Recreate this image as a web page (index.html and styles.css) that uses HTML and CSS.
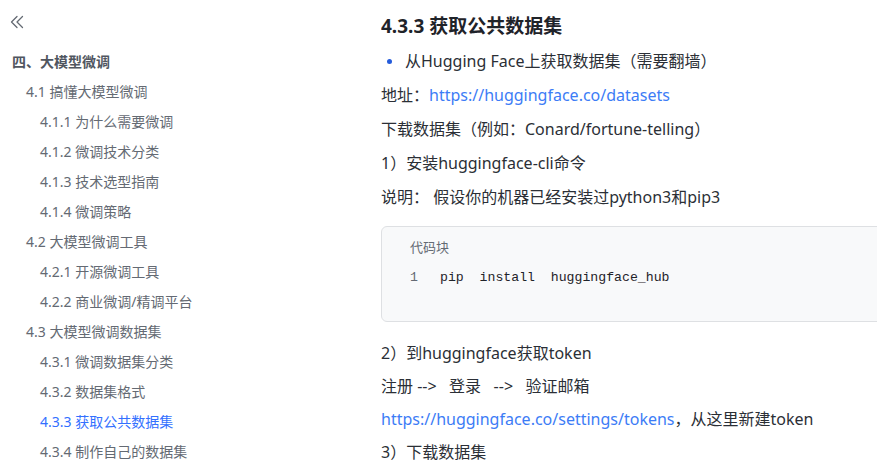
FILE: index.html
```html
<!DOCTYPE html>
<html lang="zh-CN">
<head>
<meta charset="utf-8">
<title>4.3.3 获取公共数据集</title>
<link rel="stylesheet" href="styles.css">
</head>
<body>
<div class="page">
  <aside class="sidebar">
    <div class="collapse">
      <svg width="14" height="14" viewBox="0 0 14 14" fill="none" stroke="#646a73" stroke-width="1.3" stroke-linecap="round" stroke-linejoin="round">
        <polyline points="7,1.5 1.5,7 7,12.5"/>
        <polyline points="12.5,1.5 7,7 12.5,12.5"/>
      </svg>
    </div>
    <ul class="toc">
      <li class="toc-item lv0">四、大模型微调</li>
      <li class="toc-item lv1">4.1 搞懂大模型微调</li>
      <li class="toc-item lv2">4.1.1 为什么需要微调</li>
      <li class="toc-item lv2">4.1.2 微调技术分类</li>
      <li class="toc-item lv2">4.1.3 技术选型指南</li>
      <li class="toc-item lv2">4.1.4 微调策略</li>
      <li class="toc-item lv1">4.2 大模型微调工具</li>
      <li class="toc-item lv2">4.2.1 开源微调工具</li>
      <li class="toc-item lv2">4.2.2 商业微调/精调平台</li>
      <li class="toc-item lv1">4.3 大模型微调数据集</li>
      <li class="toc-item lv2">4.3.1 微调数据集分类</li>
      <li class="toc-item lv2">4.3.2 数据集格式</li>
      <li class="toc-item lv2 active">4.3.3 获取公共数据集</li>
      <li class="toc-item lv2">4.3.4 制作自己的数据集</li>
    </ul>
  </aside>
  <main class="content">
    <h1 class="title">4.3.3 获取公共数据集</h1>
    <p class="para bullet"><span class="dot"></span>从Hugging Face上获取数据集（需要翻墙）</p>
    <p class="para">地址：<a class="link" href="#">https://huggingface.co/datasets</a></p>
    <p class="para">下载数据集（例如：Conard/fortune-telling）</p>
    <p class="para">1）安装huggingface-cli命令</p>
    <p class="para">说明： 假设你的机器已经安装过python3和pip3</p>
    <div class="codeblock">
      <div class="code-label">代码块</div>
      <div class="code-line"><span class="ln">1</span><span class="code">pip  install  huggingface_hub</span></div>
    </div>
    <p class="para after-code">2）到huggingface获取token</p>
    <p class="para tight">注册 --&gt;&nbsp;&nbsp; 登录&nbsp;&nbsp; --&gt;&nbsp;&nbsp; 验证邮箱</p>
    <p class="para tight"><a class="link" href="#">https://huggingface.co/settings/tokens</a>，从这里新建token</p>
    <p class="para tight">3）下载数据集</p>
  </main>
</div>
</body>
</html>
```

FILE: styles.css
```css
html, body {
  margin: 0;
  padding: 0;
  background: #ffffff;
}

body {
  width: 877px;
  height: 475px;
  overflow: hidden;
  font-family: "Noto Sans", "Noto Sans CJK SC", sans-serif;
}

.page {
  display: grid;
  grid-template-columns: 381px 1fr;
  height: 475px;
  overflow: hidden;
}

.sidebar {
  padding-top: 15px;
}

.collapse {
  height: 14px;
  padding-left: 10px;
  margin-bottom: 18px;
}

.collapse svg {
  display: block;
}

.toc {
  list-style: none;
  margin: 0;
  padding: 0;
}

.toc-item {
  height: 30px;
  line-height: 30px;
  font-size: 14px;
  color: #646a73;
  white-space: nowrap;
}

.lv0 {
  padding-left: 12px;
  font-weight: 700;
  color: #505660;
}

.lv1 {
  padding-left: 26px;
}

.lv2 {
  padding-left: 40px;
}

.active {
  color: #3370ff;
}

.content {
  padding-top: 12px;
  overflow: hidden;
  color: #2b2f36;
}

.title {
  margin: 0;
  font-size: 19px;
  line-height: 28px;
  font-weight: 700;
  color: #1f2329;
}

.para {
  margin: 10px 0 0 0;
  font-size: 16px;
  line-height: 24px;
  white-space: nowrap;
  color: #2b2f36;
}

.bullet {
  margin-top: 9px;
  display: flex;
  align-items: center;
  padding-left: 6px;
}

.dot {
  width: 5px;
  height: 5px;
  border-radius: 50%;
  background: #245bdb;
  margin-right: 13px;
  flex: none;
}

.link {
  color: #3c7cf6;
  text-decoration: none;
}

.codeblock {
  margin-top: 17px;
  width: 560px;
  height: 84px;
  border: 1px solid #dee0e3;
  border-radius: 6px;
  background: #f8f9fa;
  padding: 10px 0 0 28px;
  box-sizing: content-box;
}

.code-label {
  font-size: 13px;
  line-height: 20px;
  color: #646a73;
}

.code-line {
  margin-top: 11px;
  display: flex;
  line-height: 20px;
  font-family: "Liberation Mono", "DejaVu Sans Mono", monospace;
  font-size: 13.2px;
  color: #1f2329;
  white-space: pre;
}

.ln {
  width: 30px;
  color: #646a73;
}

.after-code {
  margin-top: 19px;
}

.tight {
  margin-top: 9px;
}
```
